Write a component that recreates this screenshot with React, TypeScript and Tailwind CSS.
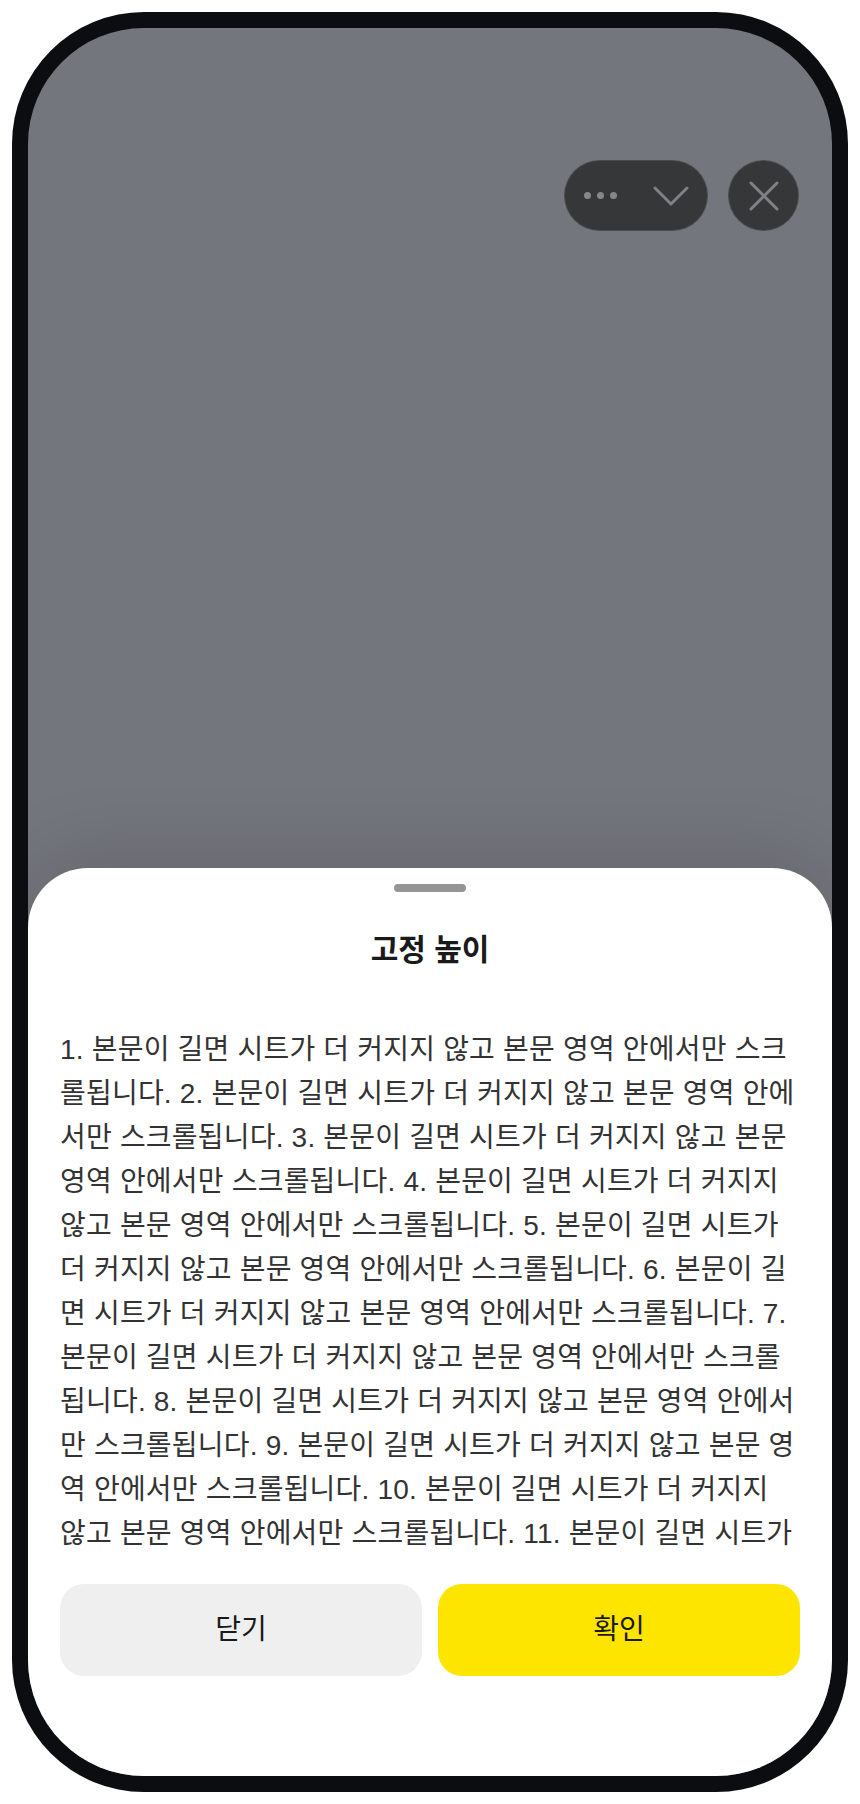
const bodyText = Array.from({ length: 20 }, (_, i) => `${i + 1}. 본문이 길면 시트가 더 커지지 않고 본문 영역 안에서만 스크롤됩니다.`).join(" ");

function MoreDots() {
  return (
    <div className="flex items-center gap-[6px]">
      <span className="h-[7px] w-[7px] rounded-full bg-[#86878b]" />
      <span className="h-[7px] w-[7px] rounded-full bg-[#86878b]" />
      <span className="h-[7px] w-[7px] rounded-full bg-[#86878b]" />
    </div>
  );
}

export default function App() {
  return (
    <div
      className="h-[1804px] w-[860px] bg-white p-[12px]"
      style={{ fontFamily: '"Liberation Sans", "Noto Sans CJK KR", sans-serif' }}
    >
      <div className="h-[1780px] w-[836px] rounded-[132px] bg-[#0c0d10] p-[16px]">
        <div className="flex h-full w-full flex-col overflow-hidden rounded-[116px] bg-[#74767d]">
          {/* top area with mini-app controls */}
          <div className="flex flex-1 justify-end gap-[20px] pr-[33px] pt-[132px]">
            <div className="flex h-[71px] w-[144px] items-center justify-between rounded-full border border-white/10 bg-[#363739] pl-[19px] pr-[18px]">
              <MoreDots />
              <svg width="36" height="20" viewBox="0 0 36 20" fill="none">
                <polyline
                  points="2,2 18,18 34,2"
                  stroke="#808185"
                  strokeWidth="3"
                  strokeLinecap="round"
                  strokeLinejoin="round"
                />
              </svg>
            </div>
            <div className="flex h-[71px] w-[71px] items-center justify-center rounded-full border border-white/10 bg-[#363739]">
              <svg width="30" height="30" viewBox="0 0 30 30" fill="none">
                <path d="M2 2L28 28M28 2L2 28" stroke="#808185" strokeWidth="3" strokeLinecap="round" />
              </svg>
            </div>
          </div>

          {/* bottom sheet */}
          <div className="flex flex-col rounded-t-[60px] bg-white px-[32px] pb-[100px] pt-[16px] shadow-[0_-10px_80px_rgba(0,0,0,0.14)]">
            <div className="mx-auto h-[8px] w-[72px] rounded-full bg-[#959595]" />
            <h2 className="mt-[40px] text-center text-[30px] font-bold leading-[36px] text-[#1a1a1a]">
              고정 높이
            </h2>
            <div className="mt-[60px] h-[528px] overflow-hidden">
              <p className="text-[28px] leading-[44px] tracking-[0.2px] text-[#333333]">{bodyText}</p>
            </div>
            <div className="mt-[28px] flex gap-[16px]">
              <button className="h-[92px] flex-1 rounded-[24px] bg-[#efefef] text-[28px] text-[#1a1a1a]">
                닫기
              </button>
              <button className="h-[92px] flex-1 rounded-[24px] bg-[#fee500] text-[28px] text-[#1a1a1a]">
                확인
              </button>
            </div>
          </div>
        </div>
      </div>
    </div>
  );
}
